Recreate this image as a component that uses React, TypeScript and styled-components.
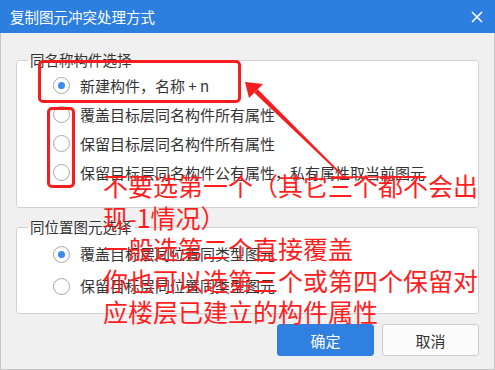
import React from "react";
import styled, { createGlobalStyle } from "styled-components";

const Global = createGlobalStyle`
  html, body { margin: 0; padding: 0; background: #fff; }
  body { font-family: "Noto Sans CJK SC", "Noto Sans", sans-serif; }
  * { box-sizing: border-box; }
`;

const Dialog = styled.div`
  position: relative;
  width: 495px;
  height: 370px;
  display: flex;
  flex-direction: column;
  background: #f0f0f0;
  overflow: hidden;
`;

const TitleBar = styled.div`
  height: 33px;
  flex: none;
  background: #2c7fde;
  display: flex;
  align-items: center;
  justify-content: space-between;
  padding: 0 11px 0 10px;
`;

const Title = styled.div`
  color: #fff;
  font-size: 14.5px;
  line-height: 20px;
  letter-spacing: 0;
`;

const CloseButton = styled.div`
  width: 14px;
  height: 14px;
  display: flex;
  align-items: center;
  justify-content: center;
`;

const Body = styled.div`
  flex: 1;
  display: flex;
  flex-direction: column;
  padding: 17px 15px 0 15px;
  border: 1px solid #c6c6c6;
  border-top: none;
`;

const Group = styled.fieldset<{ $gapTop?: number }>`
  margin: ${(p) => p.$gapTop ?? 0}px 0 0 0;
  padding: 0;
  min-width: 0;
  border: 1px solid #d2d2d2;
  border-radius: 3px;
  background: #fff;
`;

const Legend = styled.legend`
  margin-left: 11px;
  padding: 0 2px;
  font-size: 14.5px;
  line-height: 20px;
  color: #333;
`;

const Options = styled.div<{ $bottom: number }>`
  display: flex;
  flex-direction: column;
  padding: 1px 0 ${(p) => p.$bottom}px 36px;
`;

const Option = styled.label<{ $h: number }>`
  display: flex;
  align-items: center;
  gap: 10px;
  height: ${(p) => p.$h}px;
`;

const Radio = styled.span<{ $checked?: boolean }>`
  width: 17px;
  height: 17px;
  flex: none;
  border-radius: 50%;
  border: 1.5px solid #a8a8a8;
  background: #fff;
  display: flex;
  align-items: center;
  justify-content: center;
  &::after {
    content: "";
    width: 7px;
    height: 7px;
    border-radius: 50%;
    background: ${(p) => (p.$checked ? "#3a8af5" : "transparent")};
  }
`;

const OptionText = styled.span`
  font-size: 15px;
  line-height: 20px;
  color: #333;
  white-space: nowrap;
`;

const Footer = styled.div`
  display: flex;
  justify-content: flex-end;
  gap: 8px;
  margin-top: 10px;
`;

const Button = styled.div<{ $primary?: boolean }>`
  width: 97px;
  height: 32px;
  border-radius: 3px;
  display: flex;
  align-items: center;
  justify-content: center;
  font-size: 15px;
  color: ${(p) => (p.$primary ? "#fff" : "#333")};
  background: ${(p) => (p.$primary ? "#2f80e0" : "#fbfbfb")};
  border: 1px solid ${(p) => (p.$primary ? "#2f80e0" : "#cccccc")};
`;

/* annotations drawn over the dialog */
const Mark = styled.div<{ $x: number; $y: number; $w: number; $h: number }>`
  position: absolute;
  left: ${(p) => p.$x}px;
  top: ${(p) => p.$y}px;
  width: ${(p) => p.$w}px;
  height: ${(p) => p.$h}px;
  border: 3px solid #f51d1d;
  border-radius: 5px;
`;

const Note = styled.div`
  position: absolute;
  left: 103px;
  top: 170px;
  color: #ff1e1e;
  font-size: 25px;
  line-height: 31.5px;
  white-space: nowrap;
  font-family: "Noto Sans CJK SC", sans-serif;
`;

const NoteLine = styled.div``;

const Overlay = styled.svg`
  position: absolute;
  left: 0;
  top: 0;
  pointer-events: none;
`;

const group1 = [
  { text: "新建构件，名称 + n", checked: true },
  { text: "覆盖目标层同名构件所有属性" },
  { text: "保留目标层同名构件所有属性" },
  { text: "保留目标层同名构件公有属性，私有属性取当前图元" },
];

const group2 = [
  { text: "覆盖目标层同位置同类型图元", checked: true },
  { text: "保留目标层同位置同类型图元" },
];

export default function App() {
  return (
    <>
      <Global />
      <Dialog>
        <TitleBar>
          <Title>复制图元冲突处理方式</Title>
          <CloseButton>
            <svg width="12" height="12" viewBox="0 0 12 12">
              <path d="M1 1 L11 11 M11 1 L1 11" stroke="#fff" strokeWidth="1.6" />
            </svg>
          </CloseButton>
        </TitleBar>
        <Body>
          <Group>
            <Legend>同名称构件选择</Legend>
            <Options $bottom={20}>
              {group1.map((o) => (
                <Option key={o.text} $h={29}>
                  <Radio $checked={o.checked} />
                  <OptionText>{o.text}</OptionText>
                </Option>
              ))}
            </Options>
          </Group>
          <Group $gapTop={9}>
            <Legend>同位置图元选择</Legend>
            <Options $bottom={11}>
              {group2.map((o) => (
                <Option key={o.text} $h={32}>
                  <Radio $checked={o.checked} />
                  <OptionText>{o.text}</OptionText>
                </Option>
              ))}
            </Options>
          </Group>
          <Footer>
            <Button $primary>确定</Button>
            <Button>取消</Button>
          </Footer>
        </Body>

        <Mark $x={38} $y={60} $w={203} $h={43} />
        <Mark $x={47} $y={107} $w={28} $h={81} />
        <Overlay width="495" height="370" viewBox="0 0 495 370">
          <polygon points="245,82 263,84 249,98" fill="#f51d1d" />
          <polygon points="254.3,92.8 257.7,89.2 345.5,177.5 344.5,178.5" fill="#f51d1d" />
          <line x1="331" y1="177" x2="426" y2="177" stroke="#ff1e1e" strokeWidth="1.5" />
        </Overlay>
        <Note>
          <NoteLine>不要选第一个（其它三个都不会出</NoteLine>
          <NoteLine>现-1情况）</NoteLine>
          <NoteLine>一般选第二个直接覆盖</NoteLine>
          <NoteLine>你也可以选第三个或第四个保留对</NoteLine>
          <NoteLine>应楼层已建立的构件属性</NoteLine>
        </Note>
      </Dialog>
    </>
  );
}
